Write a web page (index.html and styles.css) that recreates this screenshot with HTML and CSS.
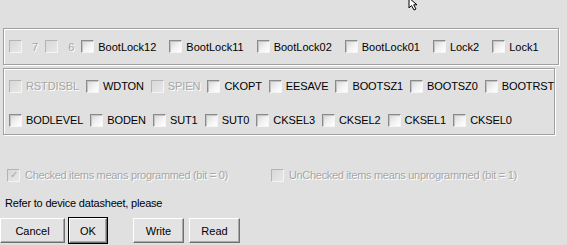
FILE: index.html
```html
<!DOCTYPE html>
<html lang="en">
<head>
    <meta charset="UTF-8">
    <title>Fuses and Lock Bits</title>
    <link rel="stylesheet" href="styles.css">
</head>
<body>
    <div class="top">
        <svg class="cursor" width="14" height="14" viewBox="0 0 14 14">
            <path d="M1 0 L1 10 L3.5 7.5 L6 12 L8 11 L5.7 6.8 L9 6.8 Z" fill="#fff" stroke="#000" stroke-width="1"/>
        </svg>
    </div>

    <div class="group locks">
        <div class="row">
            <label class="item off narrow"><span class="box"></span><span class="txt">7</span></label>
            <label class="item off narrow"><span class="box"></span><span class="txt">6</span></label>
            <label class="item"><span class="box"></span><span class="txt">BootLock12</span></label>
            <label class="item"><span class="box"></span><span class="txt">BootLock11</span></label>
            <label class="item"><span class="box"></span><span class="txt">BootLock02</span></label>
            <label class="item"><span class="box"></span><span class="txt">BootLock01</span></label>
            <label class="item"><span class="box"></span><span class="txt">Lock2</span></label>
            <label class="item"><span class="box"></span><span class="txt">Lock1</span></label>
        </div>
    </div>

    <div class="group fuses">
        <div class="row tight">
            <label class="item off"><span class="box"></span><span class="txt">RSTDISBL</span></label>
            <label class="item"><span class="box"></span><span class="txt">WDTON</span></label>
            <label class="item off"><span class="box"></span><span class="txt">SPIEN</span></label>
            <label class="item"><span class="box"></span><span class="txt">CKOPT</span></label>
            <label class="item"><span class="box"></span><span class="txt">EESAVE</span></label>
            <label class="item"><span class="box"></span><span class="txt">BOOTSZ1</span></label>
            <label class="item"><span class="box"></span><span class="txt">BOOTSZ0</span></label>
            <label class="item"><span class="box"></span><span class="txt">BOOTRST</span></label>
        </div>
        <div class="row tight">
            <label class="item"><span class="box"></span><span class="txt">BODLEVEL</span></label>
            <label class="item"><span class="box"></span><span class="txt">BODEN</span></label>
            <label class="item"><span class="box"></span><span class="txt">SUT1</span></label>
            <label class="item"><span class="box"></span><span class="txt">SUT0</span></label>
            <label class="item"><span class="box"></span><span class="txt">CKSEL3</span></label>
            <label class="item"><span class="box"></span><span class="txt">CKSEL2</span></label>
            <label class="item"><span class="box"></span><span class="txt">CKSEL1</span></label>
            <label class="item"><span class="box"></span><span class="txt">CKSEL0</span></label>
        </div>
    </div>

    <div class="legend">
        <label class="item off checked"><span class="box">&#10003;</span><span class="txt">Checked items means programmed (bit = 0)</span></label>
        <label class="item off"><span class="box"></span><span class="txt">UnChecked items means unprogrammed (bit = 1)</span></label>
    </div>

    <p class="note">Refer to device datasheet, please</p>

    <div class="buttons">
        <button class="btn cancel">Cancel</button>
        <button class="btn ok">OK</button>
        <button class="btn write">Write</button>
        <button class="btn read">Read</button>
    </div>
</body>
</html>
```

FILE: styles.css
```css
body {
    margin: 0;
    background: #e0e0e0;
    font-family: 'Liberation Sans', Arial, sans-serif;
    font-size: 11px;
    color: #000;
    width: 567px;
    height: 245px;
    overflow: hidden;
}

.top {
    position: relative;
    height: 28px;
}

.cursor {
    position: absolute;
    left: 408px;
    top: -2px;
}

.group {
    margin-left: 3px;
    border: 1px solid #a0a0a0;
    box-shadow: inset 1px 1px 0 #fff, 1px 1px 0 #fff;
}

.locks {
    width: 554px;
    height: 35px;
    display: flex;
    align-items: center;
}

.fuses {
    width: 552px;
    height: 67px;
    margin-top: 3px;
    padding-top: 9px;
    box-sizing: border-box;
}

.row {
    display: flex;
    align-items: center;
    padding-left: 5px;
    height: 16px;
}

.row .item {
    margin-right: 13px;
}

.row .narrow {
    margin-right: 7px;
}

.row.tight {
    letter-spacing: -0.1px;
}

.row.tight .item {
    margin-right: 7px;
}

.row.tight + .row.tight {
    margin-top: 18px;
}

.item {
    display: flex;
    align-items: center;
    white-space: nowrap;
}

.box {
    width: 11px;
    height: 11px;
    border: 1px solid;
    border-color: #8a8a8a #f4f4f4 #f4f4f4 #8a8a8a;
    background: linear-gradient(135deg, #d6d6d6 0%, #f2f2f2 55%, #ffffff 100%);
    box-shadow: inset 1px 1px 0 #c4c4c4;
    display: inline-flex;
    align-items: center;
    justify-content: center;
    font-size: 10px;
    line-height: 1;
    color: #a8a8a8;
    flex-shrink: 0;
}

.txt {
    margin-left: 4px;
}

.off .txt {
    color: #a6a6a6;
    text-shadow: 1px 1px 0 #fff;
}

.off .box {
    border-color: #b4b4b4 #f4f4f4 #f4f4f4 #b4b4b4;
    background: linear-gradient(135deg, #d8d8d8, #e8e8e8);
    box-shadow: none;
}

.narrow .txt {
    margin-left: 10px;
}

.legend {
    display: flex;
    padding-left: 7px;
    margin-top: 32px;
    height: 16px;
    align-items: center;
    letter-spacing: -0.3px;
}

.legend .item + .item {
    margin-left: 43px;
}

.legend .txt {
    margin-left: 5px;
}

.note {
    margin: 13px 0 0 5px;
    line-height: 14px;
    letter-spacing: -0.2px;
}

.buttons {
    display: flex;
    margin-top: 8px;
}

.btn {
    font-family: 'Liberation Sans', Arial, sans-serif;
    font-size: 11px;
    height: 25px;
    padding: 0;
    background: #e3e3e3;
    border: 1px solid;
    border-color: #ffffff #6f6f6f #6f6f6f #ffffff;
    box-shadow: inset -1px -1px 0 #a8a8a8;
    color: #000;
    box-sizing: border-box;
    flex-shrink: 0;
}

.cancel {
    width: 65px;
}

.ok {
    width: 38px;
    margin-left: 4px;
    outline: 1px solid #000;
    outline-offset: 0;
}

.write {
    width: 51px;
    margin-left: 26px;
}

.read {
    width: 51px;
    margin-left: 5px;
}
```
